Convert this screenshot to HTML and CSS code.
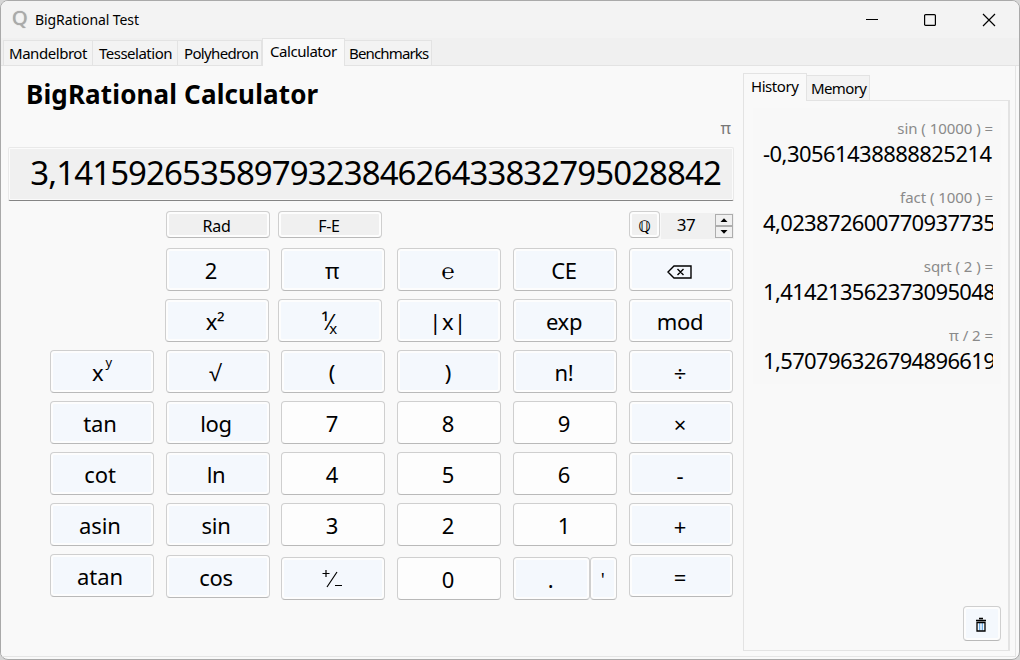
FILE: index.html
```html
<!DOCTYPE html>
<html lang="en">
<head>
<meta charset="utf-8">
<title>BigRational Test</title>
<link rel="stylesheet" href="styles.css">
</head>
<body>
<div class="window">
  <header class="titlebar">
    <span class="logo">Q</span>
    <span class="caption">BigRational Test</span>
    <svg class="winbtn" viewBox="0 0 14 14"><path d="M1 6.5H13"/></svg>
    <svg class="winbtn" viewBox="0 0 14 14"><rect x="1.6" y="1.6" width="10.8" height="10.8" rx="1"/></svg>
    <svg class="winbtn close" viewBox="0 0 14 14"><path d="M1 1L13 13M13 1L1 13"/></svg>
  </header>
  <nav class="tabs">
    <span class="tab t1">Mandelbrot</span><span class="tab t2">Tesselation</span><span class="tab t3">Polyhedron</span><span class="tab active t4">Calculator</span><span class="tab t5">Benchmarks</span>
  </nav>
  <main class="page">
    <section class="calc">
      <h1>BigRational Calculator</h1>
      <div class="expr">π</div>
      <div class="display"><span>3,1415926535897932384626433832795028842</span></div>
      <div class="options">
        <button class="key small">Rad</button>
        <button class="key small fe">F-E</button>
        <button class="key small q">ℚ</button>
        <div class="spin"><span>37</span>
          <div class="arrows">
            <i><svg viewBox="0 0 8 4"><path d="M0.5 4L4 0.3L7.5 4Z"/></svg></i>
            <i><svg viewBox="0 0 8 4"><path d="M0.5 0L4 3.7L7.5 0Z"/></svg></i>
          </div>
        </div>
      </div>
      <div class="pad">
        <div class="col c1">
          <button class="key pow">x<sup>y</sup></button>
          <button class="key">tan</button>
          <button class="key">cot</button>
          <button class="key">asin</button>
          <button class="key">atan</button>
        </div>
        <div class="col c2">
          <button class="key two">2</button>
          <button class="key sq">x²</button>
          <button class="key root">√</button>
          <button class="key">log</button>
          <button class="key">ln</button>
          <button class="key">sin</button>
          <button class="key low1">cos</button>
        </div>
        <div class="col c3">
          <button class="key">π</button>
          <button class="key inv"><span>¹⁄<small>x</small></span></button>
          <button class="key">(</button>
          <button class="key num">7</button>
          <button class="key num">4</button>
          <button class="key num">3</button>
          <button class="key low3"><svg class="sign" viewBox="0 0 20 20"><path d="M0.5 4.5H7.5M4 1V8M15 3L5 18M13 16.5H20"/></svg></button>
        </div>
        <div class="col">
          <button class="key">℮</button>
          <button class="key abs">|x|</button>
          <button class="key">)</button>
          <button class="key num">8</button>
          <button class="key num">5</button>
          <button class="key num">2</button>
          <button class="key num low3">0</button>
        </div>
        <div class="col">
          <button class="key">CE</button>
          <button class="key">exp</button>
          <button class="key">n!</button>
          <button class="key num">9</button>
          <button class="key num">6</button>
          <button class="key num">1</button>
          <div class="pair low3"><button class="key dot">.</button><button class="key tick">'</button></div>
        </div>
        <div class="col">
          <button class="key"><svg class="back" viewBox="0 0 25 14"><path d="M1 7L7 1H24V13H7ZM10.5 4L16.5 10M16.5 4L10.5 10"/></svg></button>
          <button class="key">mod</button>
          <button class="key op">÷</button>
          <button class="key op">×</button>
          <button class="key op">-</button>
          <button class="key op">+</button>
          <button class="key op">=</button>
        </div>
      </div>
    </section>
    <aside class="side">
      <nav class="subtabs"><span class="tab active s1">History</span><span class="tab s2">Memory</span></nav>
      <div class="panel">
        <div class="list">
          <div class="entry"><p>sin ( 10000 ) =</p><b class="neg">-0,30561438888825214</b></div>
          <div class="entry"><p>fact ( 1000 ) =</p><b>4,023872600770937735</b></div>
          <div class="entry"><p>sqrt ( 2 ) =</p><b>1,414213562373095048</b></div>
          <div class="entry"><p>π / 2 =</p><b>1,570796326794896619</b></div>
        </div>
        <button class="key trash"><svg viewBox="0 0 12 16"><path class="bars" d="M4.7 6V13.5M7.3 6V13.5"/><path class="ln" d="M1 3.5H11M4 1.5H8M2 5.5H10V14H2Z"/></svg></button>
      </div>
    </aside>
  </main>
</div>
</body>
</html>
```
FILE: styles.css
```css
* { box-sizing: border-box; }
body {
  margin: 0;
  width: 1020px;
  height: 660px;
  overflow: hidden;
  background: #d6d6d6;
  font-family: "Noto Sans", "Open Sans", sans-serif;
  color: #000;
}
.window {
  width: 1020px;
  height: 660px;
  border: 1px solid #a9a9a9;
  border-radius: 8px;
  background: #f9f9f9;
  overflow: hidden;
  display: flex;
  flex-direction: column;
}
.titlebar {
  height: 37px;
  flex: none;
  display: flex;
  align-items: center;
  background: #f3f3f3;
  padding: 0 23px 0 11px;
}
.logo {
  width: 23px;
  font: 20px "Noto Sans", sans-serif;
  line-height: 32px;
  height: 36px;
  color: #aaa;
  text-shadow: 0 0 1px #999;
}
.caption { flex: 1; font-size: 14px; letter-spacing: -.08px; }
.winbtn {
  width: 14px;
  height: 14px;
  margin-left: 44px;
  fill: none;
  stroke: #000;
  stroke-width: 1.2;
}
.winbtn.close { margin-left: 45px; }
.tabs {
  height: 28px;
  flex: none;
  display: flex;
  align-items: flex-end;
  background: #f0f0f0;
  border-bottom: 1px solid #e3e3e3;
  padding-left: 2px;
}
.tab {
  height: 25px;
  border: 1px solid #e3e3e3;
  border-bottom: 0;
  border-left-width: 0;
  background: #f3f3f3;
  font-size: 15px;
  line-height: 25px;
  letter-spacing: -.45px;
  white-space: nowrap;
}
.tab.active {
  height: 28px;
  margin-bottom: -1px;
  border-left-width: 1px;
  background: #f9f9f9;
  line-height: 25px;
}
.t1 { width: 90px; padding-left: 5px; border-left-width: 1px; }
.t2 { width: 85px; padding-left: 6px; letter-spacing: -.5px; }
.t3 { width: 84px; padding-left: 6px; letter-spacing: -.65px; }
.t4 { width: 83px; padding-left: 7px; }
.t5 { width: 87px; padding-left: 4px; letter-spacing: -.85px; }
.page {
  flex: 1;
  display: flex;
  background: #f9f9f9;
  padding-left: 7px;
  margin: 0 3px 2px 0;
  border-right: 1px solid #e5e5e5;
  border-bottom: 1px solid #e5e5e5;
}
.calc { width: 726px; flex: none; }
h1 {
  margin: 0;
  padding: 9px 0 0 18px;
  height: 54px;
  font-size: 26px;
  line-height: 38px;
  letter-spacing: .14px;
  white-space: nowrap;
}
.expr {
  height: 27px;
  padding-right: 3px;
  text-align: right;
  font-size: 16px;
  line-height: 17px;
  color: #777;
}
.display {
  height: 54px;
  border: 1px solid #e9e9e9;
  border-bottom-color: #858585;
  box-shadow: inset 0 0 0 1px #fbfbfb;
  background: #f0f0f0;
  border-radius: 2px;
  padding-right: 12px;
  text-align: right;
  font-size: 33px;
  line-height: 50px;
  letter-spacing: -.91px;
  white-space: nowrap;
}
.options {
  display: flex;
  height: 47px;
  padding: 10px 0 0 158px;
}
.key {
  display: block;
  width: 104px;
  height: 43px;
  margin: 0;
  padding: 1px 2px 0 0;
  flex: none;
  border: 1px solid #cfcfcf;
  border-bottom-color: #b9b9b9;
  border-radius: 4px;
  background: #f4f8fd;
  box-shadow: inset 0 0 0 2px #fdfdfd;
  color: #000;
  font: 22px "Noto Sans", "Open Sans", sans-serif;
  line-height: 38px;
  letter-spacing: -.3px;
  text-align: center;
}
.key.num { background: #fdfdfd; }
.key.small {
  height: 27px;
  padding: 3px 3px 0 0;
  background: #f0f0f0;
  font-size: 16px;
  line-height: 22px;
}
.key.fe { margin-left: 8px; padding-right: 2px; }
.key.small.q { width: 31px; margin-left: 247px; font-family: "DejaVu Sans", sans-serif; padding: 4px 2px 0; }
.spin {
  display: flex;
  width: 73px;
  height: 26px;
  margin: 2px 0 0 1px;
  background: #f0f0f0;
}
.spin span { width: 54px; padding-right: 4px; text-align: center; font-size: 17px; line-height: 24px; letter-spacing: -.5px; }
.arrows { width: 18px; padding-top: 1px; }
.arrows i {
  display: flex;
  align-items: center;
  justify-content: center;
  height: 12px;
  border: 1px solid #adadad;
  background: #f0f0f0;
}
.arrows svg { width: 8px; height: 4px; }
.pad { display: flex; gap: 12px; padding-left: 42px; }
.col { display: flex; flex-direction: column; gap: 8px; width: 104px; }
.c1 { padding-top: 102px; }
.c1 .key { padding-right: 4px; letter-spacing: -.1px; }
.c2 .key { padding-right: 4px; }
.c3 { margin-left: -1px; }
.c2 .root { padding-right: 6px; }
.sq { margin-left: -1px; }
.c2 .two { padding-right: 14px; }
.inv { margin-left: -3px; }
.inv small { font-size: 15px; vertical-align: -4px; margin-left: -2px; line-height: 1; }
.c1 .pow { padding-right: 0; }
.pow sup { font-size: 13px; line-height: 1; vertical-align: 14px; margin-left: 2px; }
.abs { letter-spacing: .5px; }
.low1 { margin-top: 1px; }
.low3 { margin-top: 3px; }
.op { font-size: 22px; padding-top: 2px; }
.sign { width: 20px; height: 20px; display: block; margin: 0 auto; fill: none; stroke: #000; stroke-width: 1.2; }
.back { width: 25px; height: 14px; display: block; margin: 4px auto 0; fill: none; stroke: #000; stroke-width: 1.4; position: relative; left: -1px; }
.pair { display: flex; gap: 0; }
.dot { width: 77px; }
.tick { width: 27px; font-size: 18px; line-height: 36px; }
.side { width: 267px; margin-left: 9px; padding-top: 6px; }
.subtabs { display: flex; align-items: flex-end; height: 28px; }
.s1.active { width: 64px; padding-left: 7px; position: relative; z-index: 1; line-height: 25px; }
.s2 { width: 63px; padding-left: 4px; letter-spacing: -.6px; }
.panel {
  height: 551px;
  border: 1px solid #e3e3e3;
  border-right-width: 2px;
  padding: 7px 7px 8px 9px;
  display: flex;
  flex-direction: column;
  justify-content: space-between;
}
.list { height: 276px; background: #f8f8f8; padding: 9px 10px 0 9px; }
.entry { height: 69px; width: 231px; overflow: hidden; }
.entry p { margin: 0; height: 22px; text-align: right; color: #8a8a8a; font-size: 15px; line-height: 22px; letter-spacing: -.05px; }
.entry b { display: block; padding-left: 1px; font-weight: 400; font-size: 22px; line-height: 28px; letter-spacing: -.64px; white-space: nowrap; }
.entry b.neg { letter-spacing: -.55px; }
.trash { width: 38px; height: 35px; align-self: flex-end; margin-bottom: 1px; }
.trash svg { display: block; width: 12px; height: 16px; margin: 2px auto 0; fill: none; }
.trash .ln { stroke: #000; stroke-width: 1.3; }
.trash .bars { stroke: #4d9be0; stroke-width: 1; }
```
